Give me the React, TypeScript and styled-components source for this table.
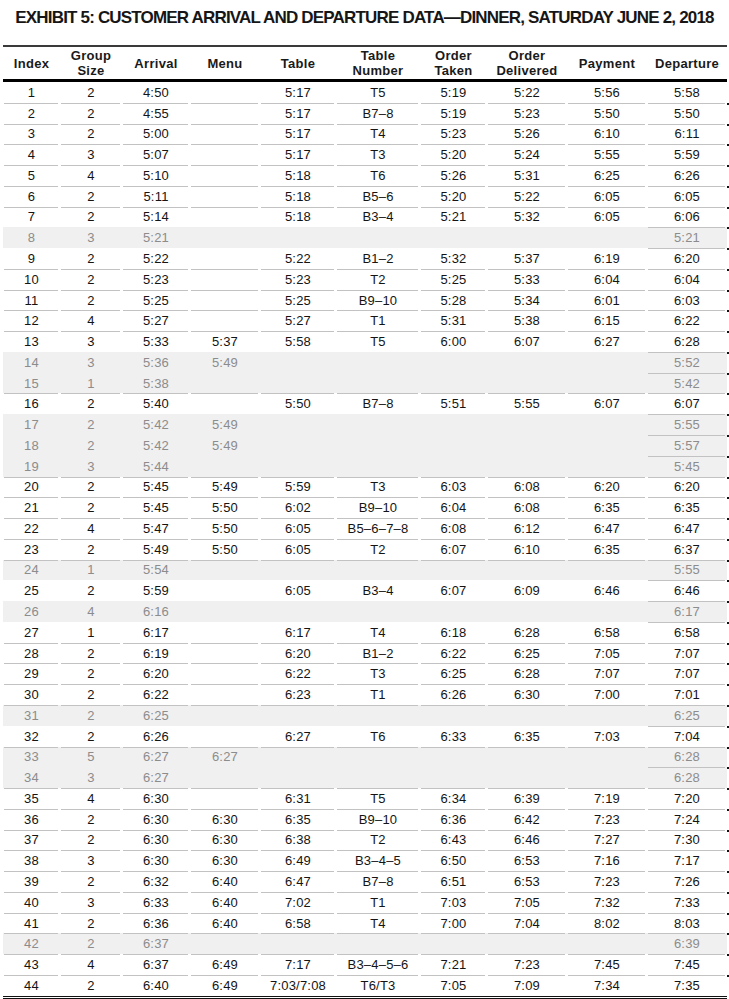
import styled, { createGlobalStyle } from "styled-components";

const GlobalStyle = createGlobalStyle`
  body {
    margin: 0;
    background: #ffffff;
    font-family: "Liberation Sans", Arial, sans-serif;
    color: #111111;
  }
`;

// index|size|arrival|menu|table|tableNo|taken|delivered|payment|departure ; "~" = walked away
const raw = `1|2|4:50||5:17|T5|5:19|5:22|5:56|5:58
2|2|4:55||5:17|B7–8|5:19|5:23|5:50|5:50
3|2|5:00||5:17|T4|5:23|5:26|6:10|6:11
4|3|5:07||5:17|T3|5:20|5:24|5:55|5:59
5|4|5:10||5:18|T6|5:26|5:31|6:25|6:26
6|2|5:11||5:18|B5–6|5:20|5:22|6:05|6:05
7|2|5:14||5:18|B3–4|5:21|5:32|6:05|6:06
~8|3|5:21|||||||5:21
9|2|5:22||5:22|B1–2|5:32|5:37|6:19|6:20
10|2|5:23||5:23|T2|5:25|5:33|6:04|6:04
11|2|5:25||5:25|B9–10|5:28|5:34|6:01|6:03
12|4|5:27||5:27|T1|5:31|5:38|6:15|6:22
13|3|5:33|5:37|5:58|T5|6:00|6:07|6:27|6:28
~14|3|5:36|5:49||||||5:52
~15|1|5:38|||||||5:42
16|2|5:40||5:50|B7–8|5:51|5:55|6:07|6:07
~17|2|5:42|5:49||||||5:55
~18|2|5:42|5:49||||||5:57
~19|3|5:44|||||||5:45
20|2|5:45|5:49|5:59|T3|6:03|6:08|6:20|6:20
21|2|5:45|5:50|6:02|B9–10|6:04|6:08|6:35|6:35
22|4|5:47|5:50|6:05|B5–6–7–8|6:08|6:12|6:47|6:47
23|2|5:49|5:50|6:05|T2|6:07|6:10|6:35|6:37
~24|1|5:54|||||||5:55
25|2|5:59||6:05|B3–4|6:07|6:09|6:46|6:46
~26|4|6:16|||||||6:17
27|1|6:17||6:17|T4|6:18|6:28|6:58|6:58
28|2|6:19||6:20|B1–2|6:22|6:25|7:05|7:07
29|2|6:20||6:22|T3|6:25|6:28|7:07|7:07
30|2|6:22||6:23|T1|6:26|6:30|7:00|7:01
~31|2|6:25|||||||6:25
32|2|6:26||6:27|T6|6:33|6:35|7:03|7:04
~33|5|6:27|6:27||||||6:28
~34|3|6:27|||||||6:28
35|4|6:30||6:31|T5|6:34|6:39|7:19|7:20
36|2|6:30|6:30|6:35|B9–10|6:36|6:42|7:23|7:24
37|2|6:30|6:30|6:38|T2|6:43|6:46|7:27|7:30
38|3|6:30|6:30|6:49|B3–4–5|6:50|6:53|7:16|7:17
39|2|6:32|6:40|6:47|B7–8|6:51|6:53|7:23|7:26
40|3|6:33|6:40|7:02|T1|7:03|7:05|7:32|7:33
41|2|6:36|6:40|6:58|T4|7:00|7:04|8:02|8:03
~42|2|6:37|||||||6:39
43|4|6:37|6:49|7:17|B3–4–5–6|7:21|7:23|7:45|7:45
44|2|6:40|6:49|7:03/7:08|T6/T3|7:05|7:09|7:34|7:35`;

type Row = { cells: string[]; dim: boolean };

const rows: Row[] = raw.split("\n").map((line) => {
  const dim = line.startsWith("~");
  return { cells: line.replace("~", "").split("|"), dim };
});

const headers = [
  ["Index"],
  ["Group", "Size"],
  ["Arrival"],
  ["Menu"],
  ["Table"],
  ["Table", "Number"],
  ["Order", "Taken"],
  ["Order", "Delivered"],
  ["Payment"],
  ["Departure"],
];

const widths = [57, 62, 68, 70, 76, 84, 67, 80, 80, 80];

// rows (1-based index) that get no rule above them across the main columns
const noRule = new Set([1, 8, 9, 14, 15, 17, 18, 19, 25, 26, 27, 32, 34]);

const Page = styled.div`
  width: 729px;
`;

const Title = styled.h1`
  margin: 0;
  height: 45px;
  box-sizing: border-box;
  padding-top: 8px;
  font-size: 17px;
  line-height: 20px;
  font-weight: 700;
  text-align: center;
  color: #161616;
  white-space: nowrap;
  letter-spacing: -0.82px;
`;

const Table = styled.table`
  margin-left: 3px;
  width: 724px;
  table-layout: fixed;
  border-collapse: separate;
  border-spacing: 0;
  border-top: 2px solid #3a3a3a;
  border-bottom: 3px double #111;
  font-size: 13px;
`;

const HeadCell = styled.th`
  height: 32px;
  padding: 0;
  border-bottom: 3px solid #000;
  font-weight: 700;
  font-size: 13px;
  line-height: 15px;
  letter-spacing: 0.3px;
  text-align: center;
  vertical-align: middle;
  color: #1a1a1a;
  white-space: nowrap;
`;

const BodyRow = styled.tr<{ $dim: boolean }>`
  height: 20.77px;
  background: ${(p) => (p.$dim ? "#f0f0f0" : "#ffffff")};
  color: ${(p) => (p.$dim ? "#8c8c8c" : "#141414")};
`;

const Cell = styled.td<{ $rule: boolean; $edge?: boolean }>`
  position: relative;
  padding: 0;
  text-align: center;
  vertical-align: middle;
  line-height: 1;
  white-space: nowrap;
  letter-spacing: 0.2px;
  background: ${(p) =>
    p.$rule
      ? "linear-gradient(#c2c2c2, #c2c2c2) 1px 0 / calc(100% - 3px) 1px no-repeat"
      : "none"};

  &::after {
    content: "";
    display: ${(p) => (p.$edge ? "block" : "none")};
    position: absolute;
    right: -2px;
    top: 0;
    width: 2px;
    height: 2px;
    background: #111;
  }
`;

export default function App() {
  return (
    <Page>
      <GlobalStyle />
      <Title>EXHIBIT 5: CUSTOMER ARRIVAL AND DEPARTURE DATA—DINNER, SATURDAY JUNE 2, 2018</Title>
      <Table>
        <colgroup>
          {widths.map((w, i) => (
            <col key={i} style={{ width: w }} />
          ))}
        </colgroup>
        <thead>
          <tr>
            {headers.map((h, i) => (
              <HeadCell key={i}>
                {h.map((line, j) => (
                  <div key={j}>{line}</div>
                ))}
              </HeadCell>
            ))}
          </tr>
        </thead>
        <tbody>
          {rows.map((row, r) => {
            const n = r + 1;
            const main = !noRule.has(n);
            return (
              <BodyRow key={n} $dim={row.dim}>
                {row.cells.map((c, ci) => {
                  let rule = main;
                  if (ci === 9) rule = n > 1;
                  if (ci === 8 && (n === 42 || n === 43)) rule = true;
                  return (
                    <Cell key={ci} $rule={rule} $edge={ci === 9 && n > 1}>
                      {c}
                    </Cell>
                  );
                })}
              </BodyRow>
            );
          })}
        </tbody>
      </Table>
    </Page>
  );
}
